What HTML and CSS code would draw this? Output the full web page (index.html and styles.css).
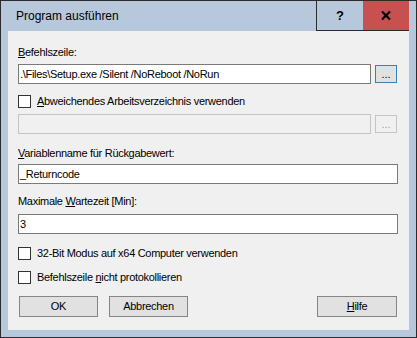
FILE: index.html
```html
<!DOCTYPE html>
<html lang="de">
<head>
  <meta charset="UTF-8">
  <meta name="viewport" content="width=device-width, initial-scale=1.0">
  <title>Program ausführen</title>
  <link rel="stylesheet" href="styles.css">
</head>
<body>
  <div class="window">
    <!-- Titelleiste -->
    <div class="titlebar">
      <span class="title">Program ausführen</span>
      <div class="caption-btn help">?</div>
      <div class="caption-btn close">
        <svg width="10" height="9" viewBox="0 0 10 9">
          <path d="M1 0.5 L9 8.5 M9 0.5 L1 8.5" stroke="#000" stroke-width="2.2" fill="none"/>
        </svg>
      </div>
    </div>

    <!-- Dialoginhalt -->
    <div class="content">
      <label class="field-label lbl-cmd"><u>B</u>efehlszeile:</label>
      <div class="input-row row-cmd">
        <div class="textbox short">.\Files\Setup.exe /Silent /NoReboot /NoRun</div>
        <div class="browse focused">...</div>
      </div>

      <div class="check chk-workdir">
        <span class="box"></span>
        <span><u>A</u>bweichendes Arbeitsverzeichnis verwenden</span>
      </div>
      <div class="input-row row-workdir">
        <div class="textbox short disabled"></div>
        <div class="browse disabled">...</div>
      </div>

      <label class="field-label lbl-var"><u>V</u>ariablenname für Rückgabewert:</label>
      <div class="textbox wide tb-var">_Returncode</div>

      <label class="field-label lbl-wait">Maximale <u>W</u>artezeit [Min]:</label>
      <div class="textbox wide tb-wait">3</div>

      <div class="check chk-32bit">
        <span class="box"></span>
        <span>32-Bit Modus auf x64 Computer verwenden</span>
      </div>
      <div class="check chk-log">
        <span class="box"></span>
        <span>Befehlszeile <u>n</u>icht protokollieren</span>
      </div>

      <div class="buttons">
        <div class="btn">OK</div>
        <div class="btn">Abbrechen</div>
        <div class="btn help-btn"><u>H</u>ilfe</div>
      </div>
    </div>
  </div>
</body>
</html>
```

FILE: styles.css
```css
body {
  margin: 0;
  background: #ffffff;
}
.window {
  box-sizing: border-box;
  width: 417px;
  height: 338px;
  border: 1px solid #2b2b2b;
  background: #b7c8dc;
  display: flex;
  flex-direction: column;
  font-family: "Liberation Sans", Arial, sans-serif;
  color: #000;
}

/* Titelleiste */
.titlebar {
  display: flex;
  height: 30px;
}
.title {
  flex: 1;
  padding-left: 15px;
  font-size: 12px;
  line-height: 30px;
}
.caption-btn {
  box-sizing: border-box;
  height: 30px;
  border-bottom: 1px solid #2b2b2b;
  display: flex;
  align-items: center;
  justify-content: center;
}
.help {
  width: 47px;
  border-left: 1px solid #2b2b2b;
  font-weight: bold;
  font-size: 13px;
}
.close {
  width: 46px;
  margin-right: 7px;
  background: #c75050;
}

/* Inhalt */
.content {
  height: 299px;
  margin: 0 7px;
  padding: 15px 11px 0 10px;
  box-sizing: border-box;
  background: #f0f0f0;
  display: flex;
  flex-direction: column;
  font-size: 11px;
  letter-spacing: -0.3px;
}
.field-label {
  display: block;
  line-height: 13px;
  height: 13px;
}
.input-row {
  display: flex;
  gap: 4px;
  align-items: center;
  height: 20px;
}
.textbox {
  box-sizing: border-box;
  height: 20px;
  border: 1px solid #7a7a7a;
  background: #fff;
  padding-left: 1px;
  line-height: 18px;
  white-space: nowrap;
  overflow: hidden;
}
.textbox.short {
  width: 353px;
}
.textbox.wide {
  width: 380px;
}
.textbox.disabled {
  border-color: #c4c4c4;
  background: #f0f0f0;
}
.browse {
  box-sizing: border-box;
  width: 22px;
  height: 18px;
  border: 1px solid #adadad;
  background: #e1e1e1;
  text-align: center;
  line-height: 16px;
  letter-spacing: 0;
}
.browse.focused {
  border-color: #3c7fb1;
}
.browse.disabled {
  border-color: #c4c4c4;
  background: #f0f0f0;
  color: #a0a0a0;
}

.check {
  display: flex;
  align-items: center;
  gap: 6px;
  height: 13px;
  line-height: 13px;
}
.box {
  box-sizing: border-box;
  width: 13px;
  height: 13px;
  border: 1px solid #333;
  background: #fff;
}

/* Abstände */
.row-cmd { margin-top: 5px; }
.chk-workdir { margin-top: 11px; }
.row-workdir { margin-top: 6px; }
.lbl-var { margin-top: 13px; }
.tb-var { margin-top: 4px; }
.lbl-wait { margin-top: 11px; }
.tb-wait { margin-top: 6px; }
.chk-32bit { margin-top: 13px; }
.chk-log { margin-top: 11px; }

.buttons {
  display: flex;
  gap: 11px;
  margin-top: 12px;
  padding-left: 1px;
  padding-right: 1px;
}
.btn {
  box-sizing: border-box;
  width: 79px;
  height: 21px;
  border: 1px solid #858585;
  background: #e1e1e1;
  text-align: center;
  line-height: 19px;
}
.help-btn {
  width: 80px;
  margin-left: auto;
}
```
